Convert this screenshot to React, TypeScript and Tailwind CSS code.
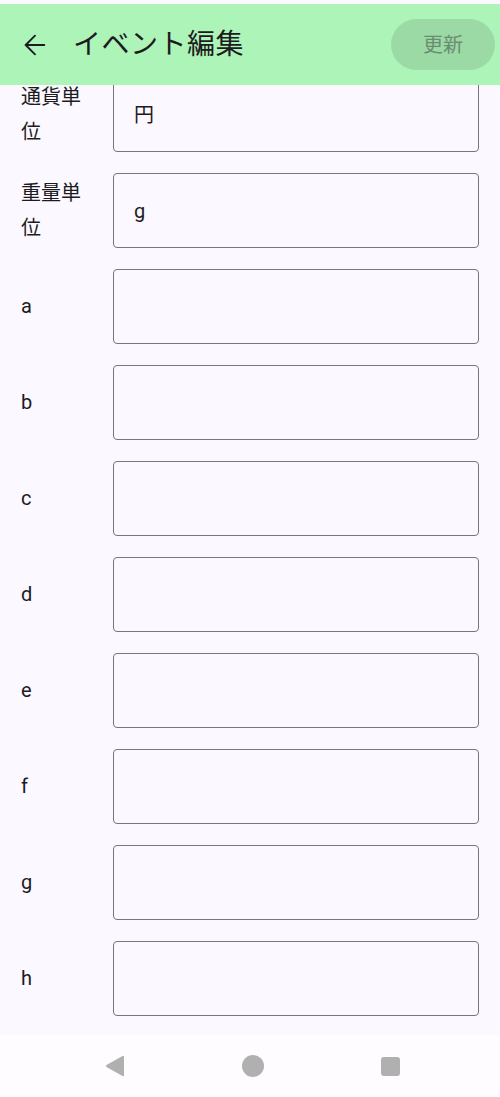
import { ArrowLeft } from "lucide-react";

const fields = [
  { label: "通貨単位", value: "円" },
  { label: "重量単位", value: "g" },
  { label: "a", value: "" },
  { label: "b", value: "" },
  { label: "c", value: "" },
  { label: "d", value: "" },
  { label: "e", value: "" },
  { label: "f", value: "" },
  { label: "g", value: "" },
  { label: "h", value: "" },
];

const font = "font-['Roboto','Noto_Sans_CJK_JP',sans-serif]";

const App = () => {
  return (
    <div className={`flex h-[1097px] w-[500px] flex-col overflow-hidden bg-[#fdf8fe] ${font}`}>
      {/* status strip */}
      <div className="h-[4px] shrink-0 bg-[#fbf8ff]" />

      {/* App bar */}
      <header className="flex h-[81px] shrink-0 items-center bg-[#adf4b8] pl-[19px] pr-[5px]">
        <ArrowLeft className="h-[32px] w-[32px] text-[#1d1b20]" strokeWidth={1.4} />
        <h1 className="ml-[22px] text-[28px] font-normal leading-none text-[#1d1b20] tracking-[0.5px]">イベント編集</h1>
        <button className="ml-auto h-[51px] w-[104px] rounded-full bg-[#9bd9a5] text-[20px] text-[#6a8d71]">
          更新
        </button>
      </header>

      {/* Scrolled form */}
      <main className="flex-1 overflow-hidden bg-[#fbf8ff]">
        <div className="-mt-[8px] flex flex-col gap-[21px] px-[21px]">
          {fields.map((field, index) => (
            <div key={index} className="flex items-center">
              <div className="w-[76px] shrink-0 text-[20px] leading-[35px] text-[#1d1b20]">{field.label}</div>
              <div className="ml-[16px] flex h-[75px] flex-1 items-center rounded-[4px] border border-[#79747e] px-[20px] text-[20px] text-[#1d1b20]">
                {field.value}
              </div>
            </div>
          ))}
        </div>
      </main>

      {/* Navigation bar */}
      <nav className="flex h-[62px] shrink-0 items-center bg-[#fefcff]">
        <div className="flex w-full items-center">
          <svg className="ml-[105px] h-[22px] w-[20px]" viewBox="0 0 20 22">
            <path d="M19 2 Q19 0 17.5 1 L1.5 10 Q0 11 1.5 12 L17.5 21 Q19 22 19 20 Z" fill="#b0b0b0" />
          </svg>
          <div className="ml-[117px] h-[22px] w-[22px] rounded-full bg-[#b0b0b0]" />
          <div className="ml-[117px] h-[19px] w-[19px] rounded-[3px] bg-[#b0b0b0]" />
        </div>
      </nav>
    </div>
  );
};

export default App;
